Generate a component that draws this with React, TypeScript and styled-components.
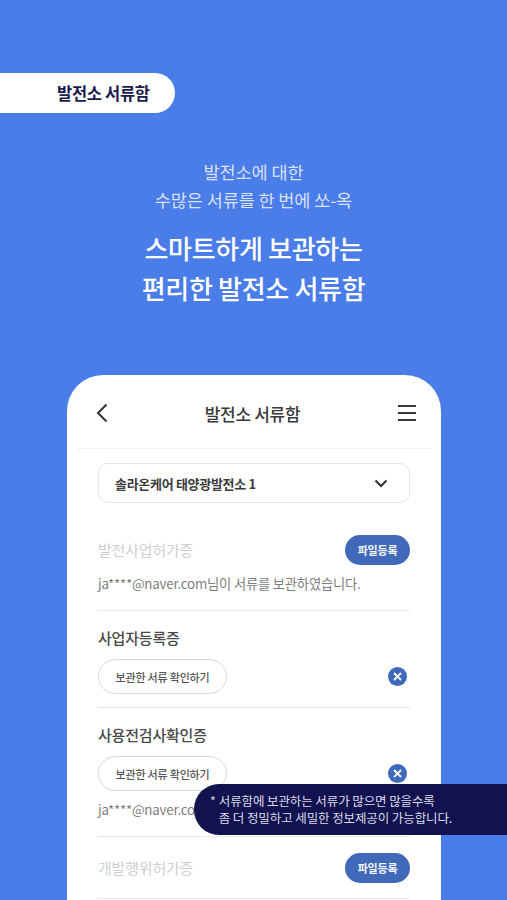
import * as React from "react";
import styled, { createGlobalStyle } from "styled-components";

const GlobalStyle = createGlobalStyle`
  html, body {
    margin: 0;
    padding: 0;
    background: #4a7de8;
  }
  * {
    box-sizing: border-box;
  }
`;

const Page = styled.main`
  position: relative;
  width: 507px;
  height: 900px;
  overflow: hidden;
  background: #4a7de8;
  padding-top: 73px;
  font-family: "Noto Sans CJK KR", "Noto Sans", sans-serif;
`;

const Tag = styled.div`
  width: 175px;
  height: 40px;
  padding-left: 57px;
  display: flex;
  align-items: center;
  background: #fff;
  border-radius: 0 20px 20px 0;
  color: #1c1b4d;
  font-size: 16.5px;
  font-weight: 700;
  letter-spacing: -0.3px;
`;

const Intro = styled.p`
  margin: 45px 0 0;
  text-align: center;
  color: rgba(255, 255, 255, 0.78);
  font-size: 17.5px;
  font-weight: 400;
  line-height: 28px;
  letter-spacing: -0.1px;
`;

const Headline = styled.h1`
  margin: 14px 0 0;
  text-align: center;
  color: #fff;
  font-size: 26px;
  font-weight: 500;
  line-height: 40px;
  letter-spacing: -0.3px;
`;

const Phone = styled.section`
  width: 374px;
  height: 600px;
  margin: 67px 0 0 67px;
  background: #fff;
  border-radius: 36px 36px 0 0;
`;

const PhoneHeader = styled.header`
  height: 74px;
  margin: 0 10px;
  padding: 3px 14px 0 19px;
  display: flex;
  align-items: center;
  justify-content: space-between;
  border-bottom: 1px solid #f1f1f1;
  color: #333;
`;

const HeaderTitle = styled.div`
  font-size: 17px;
  font-weight: 500;
  letter-spacing: -0.3px;
  color: #3a3a3a;
`;

const Body = styled.div`
  padding: 14px 31px 0;
`;

const Select = styled.div`
  height: 40px;
  padding: 0 21px 0 16px;
  display: flex;
  align-items: center;
  justify-content: space-between;
  border: 1px solid #e6e6e6;
  border-radius: 10px;
  font-size: 13px;
  font-weight: 700;
  letter-spacing: -0.3px;
  color: #3c3c3c;
`;

const Doc = styled.div<{ $top: number; $pad: number; $height: number }>`
  height: ${(p) => p.$height}px;
  margin-top: ${(p) => p.$top}px;
  padding-top: ${(p) => p.$pad}px;
  border-bottom: 1px solid #e9e9e9;
`;

const DocRow = styled.div`
  display: flex;
  align-items: center;
  justify-content: space-between;
`;

const DocTitle = styled.div<{ $muted?: boolean }>`
  font-size: 15px;
  line-height: 30px;
  font-weight: ${(p) => (p.$muted ? 400 : 500)};
  letter-spacing: -0.2px;
  color: ${(p) => (p.$muted ? "#cfcfcf" : "#4a4a4a")};
`;

const UploadButton = styled.button`
  width: 65px;
  height: 30px;
  padding: 0;
  border: 0;
  border-radius: 15px;
  background: #4169b9;
  color: #f2f5fc;
  font-family: inherit;
  font-size: 11px;
  font-weight: 700;
  letter-spacing: -0.2px;
`;

const ViewButton = styled.button`
  width: 129px;
  height: 35px;
  padding: 0;
  border: 1px solid #d8d8d8;
  border-radius: 18px;
  background: #fff;
  color: #555;
  font-family: inherit;
  font-size: 11px;
  font-weight: 500;
  letter-spacing: -0.2px;
`;

const ViewRow = styled(DocRow)`
  margin-top: 6px;
  padding-right: 3px;
`;

const RemoveIcon = styled.span`
  width: 19px;
  height: 19px;
  display: flex;
  align-items: center;
  justify-content: center;
  border-radius: 50%;
  background: #3f69bb;
`;

const Owner = styled.div<{ $gap: number }>`
  margin-top: ${(p) => p.$gap}px;
  font-size: 13.3px;
  line-height: 18px;
  letter-spacing: -0.2px;
  color: #7d7d7d;
`;

const Note = styled.aside`
  position: absolute;
  left: 194px;
  top: 784px;
  width: 313px;
  height: 51px;
  padding: 9px 0 0 16px;
  display: flex;
  gap: 3px;
  background: #12124f;
  border-radius: 25px 0 0 25px;
  color: #d9dcec;
  font-size: 12.5px;
  line-height: 16.5px;
  letter-spacing: -0.1px;
  white-space: nowrap;
`;

const BackIcon = () => (
  <svg width="12" height="20" viewBox="0 0 12 20" fill="none" stroke="#333" strokeWidth="2">
    <path d="M10.5 1.5 2 10l8.5 8.5" />
  </svg>
);

const MenuIcon = () => (
  <svg width="20" height="18" viewBox="0 0 20 18" fill="none" stroke="#3a3a3a" strokeWidth="2">
    <path d="M1 2h18M1 9h18M1 16h18" />
  </svg>
);

const ChevronIcon = () => (
  <svg width="14" height="9" viewBox="0 0 14 9" fill="none" stroke="#333" strokeWidth="2">
    <path d="M1.5 1.5 7 7l5.5-5.5" />
  </svg>
);

const CloseGlyph = () => (
  <svg width="9" height="9" viewBox="0 0 9 9" fill="none" stroke="#fff" strokeWidth="1.8">
    <path d="M1 1l7 7M8 1 1 8" />
  </svg>
);

const App: React.FunctionComponent = () => {
  return (
    <Page>
      <GlobalStyle />
      <Tag>발전소 서류함</Tag>
      <Intro>
        발전소에 대한<br />
        수많은 서류를 한 번에 쏘-옥
      </Intro>
      <Headline>
        스마트하게 보관하는<br />
        편리한 발전소 서류함
      </Headline>

      <Phone>
        <PhoneHeader>
          <BackIcon />
          <HeaderTitle>발전소 서류함</HeaderTitle>
          <MenuIcon />
        </PhoneHeader>
        <Body>
          <Select>
            솔라온케어 태양광발전소 1
            <ChevronIcon />
          </Select>

          <Doc $top={32} $pad={0} $height={76}>
            <DocRow>
              <DocTitle $muted>발전사업허가증</DocTitle>
              <UploadButton>파일등록</UploadButton>
            </DocRow>
            <Owner $gap={10}>ja****@naver.com님이 서류를 보관하였습니다.</Owner>
          </Doc>

          <Doc $top={0} $pad={12} $height={97}>
            <DocTitle>사업자등록증</DocTitle>
            <ViewRow>
              <ViewButton>보관한 서류 확인하기</ViewButton>
              <RemoveIcon><CloseGlyph /></RemoveIcon>
            </ViewRow>
          </Doc>

          <Doc $top={0} $pad={12} $height={129}>
            <DocTitle>사용전검사확인증</DocTitle>
            <ViewRow>
              <ViewButton>보관한 서류 확인하기</ViewButton>
              <RemoveIcon><CloseGlyph /></RemoveIcon>
            </ViewRow>
            <Owner $gap={10}>ja****@naver.com님이 서류를 보관하였습니다.</Owner>
          </Doc>

          <Doc $top={0} $pad={16} $height={62}>
            <DocRow>
              <DocTitle $muted>개발행위허가증</DocTitle>
              <UploadButton>파일등록</UploadButton>
            </DocRow>
          </Doc>
        </Body>
      </Phone>

      <Note>
        <span>*</span>
        <span>
          서류함에 보관하는 서류가 많으면 많을수록<br />
          좀 더 정밀하고 세밀한 정보제공이 가능합니다.
        </span>
      </Note>
    </Page>
  );
};

export default App;
